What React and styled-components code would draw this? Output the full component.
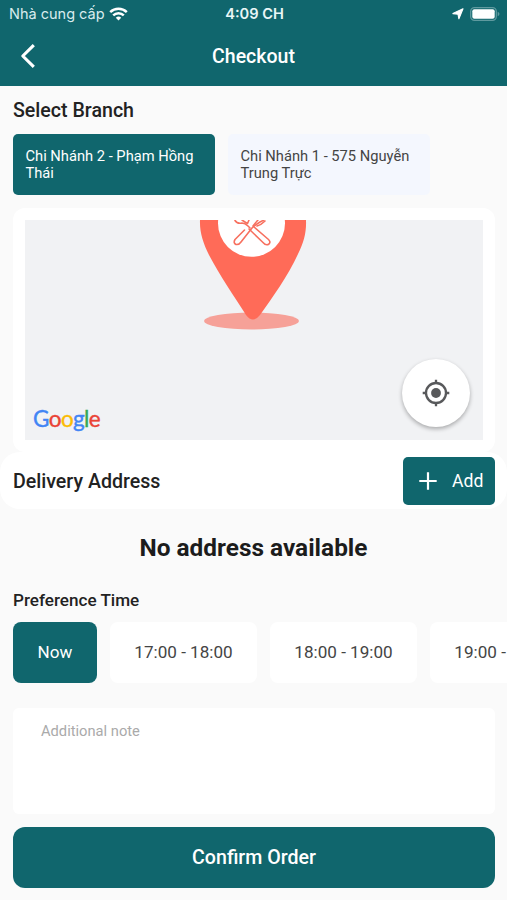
import React, { useState } from 'react';
import styled, { createGlobalStyle } from 'styled-components';

const teal = '#10666d';

const GlobalStyle = createGlobalStyle`
  * {
    box-sizing: border-box;
  }

  body {
    margin: 0;
    background-color: #fafafa;
    color: #222;
    font-family: Roboto, 'Noto Sans', sans-serif;
  }

  button, textarea {
    font-family: inherit;
    border: none;
  }
`;

const Screen = styled.div`
  display: flex;
  flex-direction: column;
  height: 900px;
  overflow: hidden;
`;

// Header
const Header = styled.header`
  height: 86px;
  flex-shrink: 0;
  background-color: ${teal};
  color: white;
`;

const StatusBar = styled.div`
  display: grid;
  grid-template-columns: 1fr auto 1fr;
  align-items: center;
  height: 27px;
  padding: 0 7px 0 9px;
  font-family: Inter, sans-serif;
  font-size: 14px;
`;

const Carrier = styled.div`
  display: flex;
  align-items: center;
  gap: 4px;
  color: #d9ecee;
  font-size: 14.5px;
`;

const Clock = styled.div`
  font-weight: 600;
  font-size: 14.6px;
  color: #e9f6f7;
`;

const StatusIcons = styled.div`
  display: flex;
  align-items: center;
  justify-content: flex-end;
  gap: 6px;
`;

const TitleBar = styled.div`
  display: grid;
  grid-template-columns: 60px 1fr 60px;
  align-items: center;
  height: 59px;
`;

const BackButton = styled.button`
  display: flex;
  height: 100%;
  padding: 0 0 2px 20px;
  align-items: center;
  background: none;
  color: white;
  cursor: pointer;
`;

const Title = styled.h1`
  margin: 0;
  text-align: center;
  font-size: 19.5px;
  font-weight: 500;
`;

// Branches
const SectionTitle = styled.h2`
  margin: 0;
  padding-top: 2px;
  font-size: 19.6px;
  line-height: 22px;
  font-weight: 500;
`;

const BranchSection = styled.section`
  padding: 12px 13px 13px;
`;

const BranchList = styled.div`
  display: flex;
  gap: 13px;
  margin-top: 12px;
`;

const BranchCard = styled.button`
  width: 202px;
  height: 61px;
  padding: 0 12px 0 12.5px;
  border-radius: 5px;
  text-align: left;
  font-size: 14.7px;
  line-height: 17px;
  color: ${({ $active }) => ($active ? '#fff' : '#444')};
  background-color: ${({ $active }) => ($active ? teal : '#f4f7fe')};
  cursor: pointer;
`;

// Map
const MapCard = styled.div`
  height: 244px;
  flex-shrink: 0;
  margin: 0 12px 0 13px;
  padding: 12px;
  border-radius: 12px;
  background-color: white;
`;

const MapView = styled.div`
  position: relative;
  height: 220px;
  background-color: #f1f2f4;
  overflow: hidden;

  > svg {
    display: block;
  }
`;

const GoogleMark = styled.div`
  position: absolute;
  left: 8px;
  bottom: 7px;
  font-family: Lato, sans-serif;
  font-size: 22.5px;
  line-height: 28px;
  letter-spacing: -0.6px;
  -webkit-text-stroke: 0.4px;
`;

const Letter = styled.span`
  color: ${({ $color }) => $color};
`;

const LocateButton = styled.button`
  position: absolute;
  right: 13px;
  bottom: 13px;
  display: flex;
  align-items: center;
  justify-content: center;
  width: 68px;
  height: 68px;
  padding: 0;
  border-radius: 50%;
  background-color: white;
  box-shadow: 0 2px 4px rgba(0, 0, 0, 0.3);
  cursor: pointer;
`;

// Address
const AddressRow = styled.div`
  display: flex;
  align-items: center;
  justify-content: space-between;
  height: 57px;
  flex-shrink: 0;
  padding: 0 12px 0 13px;
  border-radius: 20px;
  background-color: white;
`;

const AddButton = styled.button`
  display: flex;
  align-items: center;
  gap: 15px;
  width: 92px;
  height: 48px;
  padding: 0 0 0 16px;
  border-radius: 5px;
  background-color: ${teal};
  color: white;
  font-size: 17.6px;
  cursor: pointer;
`;

const EmptyText = styled.p`
  margin: 24px 0 0;
  text-align: center;
  font-size: 24.4px;
  line-height: 30px;
  font-weight: 700;
  color: #1c1c1c;
`;

// Time
const TimeSection = styled.section`
  padding: 26px 0 0 13px;
`;

const TimeTitle = styled.h3`
  margin: 0;
  padding-top: 1px;
  font-size: 17.1px;
  line-height: 21px;
  font-weight: 500;
`;

const TimeList = styled.div`
  display: flex;
  gap: 13px;
  margin-top: 11px;
  overflow: hidden;
`;

const TimeSlot = styled.button`
  flex: 0 0 ${({ $width }) => $width}px;
  height: 61px;
  padding: 0 0 2px;
  border-radius: 8px;
  font-size: 17.1px;
  color: ${({ $active }) => ($active ? '#fff' : '#444')};
  background-color: ${({ $active }) => ($active ? teal : '#fff')};
  cursor: pointer;
`;

const Note = styled.textarea`
  height: 106px;
  flex-shrink: 0;
  margin: 25px 12px 0 13px;
  padding: 14px 28px;
  border-radius: 6px;
  background-color: white;
  font-size: 14.7px;
  line-height: 18px;
  resize: none;
  outline: none;

  &::placeholder {
    color: #aaa;
  }
`;

const ConfirmButton = styled.button`
  height: 61px;
  flex-shrink: 0;
  margin: 13px 12px 0 13px;
  border-radius: 12px;
  background-color: ${teal};
  color: white;
  font-size: 19.6px;
  font-weight: 500;
  cursor: pointer;
`;

const branches = ['Chi Nhánh 2 - Phạm Hồng Thái', 'Chi Nhánh 1 - 575 Nguyễn Trung Trực'];

const times = [
  { label: 'Now', width: 84 },
  { label: '17:00 - 18:00', width: 147 },
  { label: '18:00 - 19:00', width: 147 },
  { label: '19:00 - 20:00', width: 147 },
];

const googleLetters = [
  ['G', '#4285f4'],
  ['o', '#ea4335'],
  ['o', '#fbbc05'],
  ['g', '#4285f4'],
  ['l', '#34a853'],
  ['e', '#ea4335'],
];

const WifiIcon = () => (
  <svg width="19" height="14" viewBox="0 0 19 14" fill="none" stroke="white" strokeWidth="2.5">
    <path d="M1.2 5.1a12 12 0 0 1 16.6 0" />
    <path d="M4.2 8.3a7.6 7.6 0 0 1 10.6 0" />
    <path d="M9.5 13.6 6.8 10.8a4 4 0 0 1 5.4 0Z" fill="white" stroke="none" />
  </svg>
);

const LocationArrow = () => (
  <svg width="12" height="12" viewBox="0 0 12 12" fill="white">
    <path d="M11 .8 6.9 10.8 6 6.2.9 5.6Z" stroke="white" strokeWidth="1.1" strokeLinejoin="round" />
  </svg>
);

const BatteryIcon = () => (
  <svg width="30" height="14" viewBox="0 0 30 14">
    <rect x=".7" y=".7" width="25.6" height="12.6" rx="3.8" fill="none" stroke="#5f9a9f" strokeWidth="1.3" />
    <rect x="2.3" y="2.3" width="22.4" height="9.4" rx="2" fill="white" />
    <path d="M27.7 4.8c2.3.8 2.3 3.6 0 4.4Z" fill="#5f9a9f" />
  </svg>
);

const BackIcon = () => (
  <svg width="16" height="26" viewBox="0 0 16 26" fill="none" stroke="white" strokeWidth="3.1">
    <path d="M13.8 2.2 2.8 13l11 10.8" strokeLinejoin="round" />
  </svg>
);

// Branch marker, its head is cut off by the top edge of the map
const BranchPin = () => (
  <svg width="458" height="220" viewBox="25 220 458 220">
    <ellipse cx="251.5" cy="321" rx="47.5" ry="8.5" fill="#f6a198" />
    <path
      d="M200 220C199.5 232 203 243 209 255C220 276 234 296 246 315Q253 324 260 315C272 298 288 276 298 254C304 242 306.5 232 306 220Z"
      fill="#ff6b58"
    />
    <circle cx="251.5" cy="223.3" r="33.5" fill="white" />
    <g fill="none" stroke="#f7705f" strokeWidth="1.6" strokeLinecap="round" strokeLinejoin="round">
      <path d="M253.5 226.5 268.5 239.5Q271 242 269 244Q266 246 263 242.5L249 229" />
      <path d="M244.5 230 235 239.5Q233 243 236 244.5Q239 245 241 242L252 228Q255 225 260 222L264 220" />
      <path d="M235 220.5Q237 224 242 223Q245 223 248 226L250 228" />
      <path d="M242 220Q245 222 247.5 223.5L249 220M253 226Q257 221 258 220M257 226Q261 225 265 221" />
    </g>
  </svg>
);

const LocateIcon = () => (
  <svg width="28" height="28" viewBox="0 0 28 28" fill="none" stroke="#58595b" strokeWidth="2.3">
    <circle cx="14" cy="14" r="10" />
    <circle cx="14" cy="14" r="4.9" fill="#58595b" stroke="none" />
    <path d="M14 .7v4M14 23.3v4M.7 14h4M23.3 14h4" />
  </svg>
);

const PlusIcon = () => (
  <svg width="18" height="18" viewBox="0 0 18 18" stroke="white" strokeWidth="2.2">
    <path d="M9 .3v17.4M.3 9h17.4" />
  </svg>
);

const App = () => {
  const [branch, setBranch] = useState(0);
  const [time, setTime] = useState(0);
  const [note, setNote] = useState('');

  return (
    <>
      <GlobalStyle />
      <Screen>
        <Header>
          <StatusBar>
            <Carrier>
              Nhà cung cấp
              <WifiIcon />
            </Carrier>
            <Clock>4:09 CH</Clock>
            <StatusIcons>
              <LocationArrow />
              <BatteryIcon />
            </StatusIcons>
          </StatusBar>
          <TitleBar>
            <BackButton aria-label="Back">
              <BackIcon />
            </BackButton>
            <Title>Checkout</Title>
          </TitleBar>
        </Header>

        <BranchSection>
          <SectionTitle>Select Branch</SectionTitle>
          <BranchList>
            {branches.map((name, index) => (
              <BranchCard key={name} $active={branch === index} onClick={() => setBranch(index)}>
                {name}
              </BranchCard>
            ))}
          </BranchList>
        </BranchSection>

        <MapCard>
          <MapView>
            <BranchPin />
            <GoogleMark>
              {googleLetters.map(([letter, color], index) => (
                <Letter key={index} $color={color}>{letter}</Letter>
              ))}
            </GoogleMark>
            <LocateButton aria-label="My location">
              <LocateIcon />
            </LocateButton>
          </MapView>
        </MapCard>

        <AddressRow>
          <SectionTitle>Delivery Address</SectionTitle>
          <AddButton>
            <PlusIcon />
            Add
          </AddButton>
        </AddressRow>
        <EmptyText>No address available</EmptyText>

        <TimeSection>
          <TimeTitle>Preference Time</TimeTitle>
          <TimeList>
            {times.map(({ label, width }, index) => (
              <TimeSlot
                key={label}
                $width={width}
                $active={time === index}
                onClick={() => setTime(index)}
              >
                {label}
              </TimeSlot>
            ))}
          </TimeList>
        </TimeSection>

        <Note
          placeholder="Additional note"
          value={note}
          onChange={(e) => setNote(e.target.value)}
        />
        <ConfirmButton>Confirm Order</ConfirmButton>
      </Screen>
    </>
  );
};

export default App;
